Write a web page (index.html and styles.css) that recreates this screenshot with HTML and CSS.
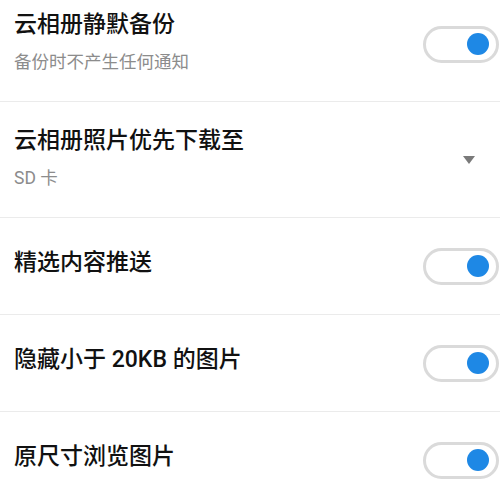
FILE: index.html
```html
<!DOCTYPE html>
<html lang="zh-CN">
<head>
<meta charset="utf-8">
<title>设置</title>
<link rel="stylesheet" href="styles.css">
</head>
<body>
<div class="list">
  <div class="row row-two">
    <div class="text">
      <div class="title">云相册静默备份</div>
      <div class="sub">备份时不产生任何通知</div>
    </div>
    <div class="switch on"><span class="knob"></span></div>
  </div>
  <div class="row row-two row-select">
    <div class="text">
      <div class="title">云相册照片优先下载至</div>
      <div class="sub">SD 卡</div>
    </div>
    <span class="caret"></span>
  </div>
  <div class="row row-one">
    <div class="text text-one">
      <div class="title">精选内容推送</div>
    </div>
    <div class="switch on"><span class="knob"></span></div>
  </div>
  <div class="row row-one">
    <div class="text text-one">
      <div class="title">隐藏小于 20KB 的图片</div>
    </div>
    <div class="switch on"><span class="knob"></span></div>
  </div>
  <div class="row row-one">
    <div class="text text-one">
      <div class="title">原尺寸浏览图片</div>
    </div>
    <div class="switch on"><span class="knob"></span></div>
  </div>
</div>
</body>
</html>
```

FILE: styles.css
```css
html, body {
  margin: 0;
  padding: 0;
  background: #ffffff;
  overflow: hidden;
}

body {
  font-family: Roboto, "Noto Sans CJK SC", sans-serif;
  color: #111111;
}

.list {
  margin-top: -13px;
}

.row {
  display: flex;
  align-items: center;
  padding-left: 14px;
  border-bottom: 1px solid #ebebeb;
}

.row-two {
  height: 114px;
}

.row-select {
  height: 115px;
}

.row-one {
  height: 96px;
}

.text {
  flex: 1;
  min-width: 0;
  padding-bottom: 4px;
}

.text-one {
  padding-bottom: 6px;
}

.title {
  font-size: 23px;
  line-height: 30px;
  font-weight: 500;
  color: #111111;
}

.sub {
  margin-top: 10px;
  font-size: 17.5px;
  line-height: 24px;
  color: #8c8c8c;
}

.switch {
  box-sizing: border-box;
  width: 76px;
  height: 37px;
  margin-right: 1px;
  border: 3px solid #dadada;
  border-radius: 19px;
  background: #ffffff;
  display: flex;
  align-items: center;
  justify-content: flex-end;
  padding-right: 7px;
}

.knob {
  width: 22px;
  height: 22px;
  border-radius: 50%;
  background: #1e88e5;
}

.caret {
  width: 0;
  height: 0;
  margin-right: 25px;
  border-left: 6.5px solid transparent;
  border-right: 6.5px solid transparent;
  border-top: 8px solid #7a7a7a;
}
```
